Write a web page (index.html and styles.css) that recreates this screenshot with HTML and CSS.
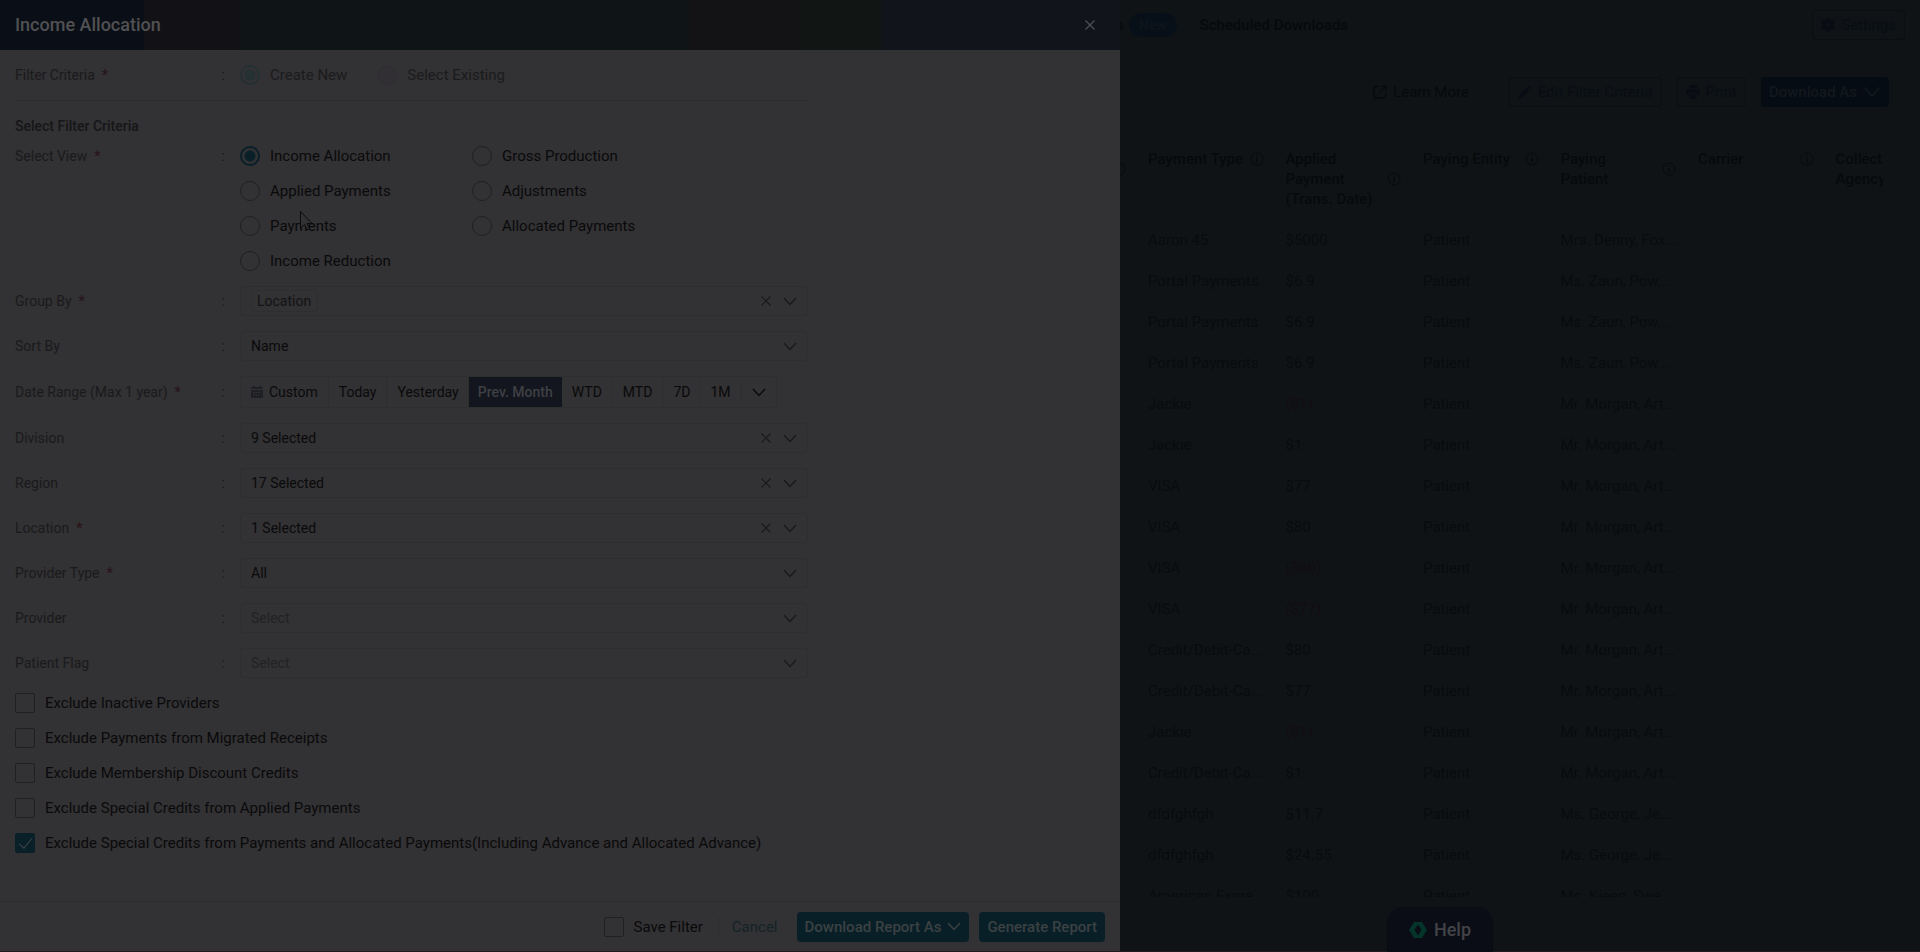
FILE: index.html
```html
<!DOCTYPE html>
<html lang="en">
<head>
  <meta charset="UTF-8" />
  <meta name="viewport" content="width=device-width, initial-scale=1.0"/>
  <title>Income Allocation</title>
  <link rel="stylesheet" href="styles.css">
</head>
<body>
  <!-- shared icons -->
  <svg class="sprite" aria-hidden="true">
    <symbol id="chevron" viewBox="0 0 14 9"><path d="M1 1l6 6.500L13 1" fill="none" stroke="currentColor" stroke-width="1.4"/></symbol>
    <symbol id="cross" viewBox="0 0 10 10"><path d="M.5.5l9 9M9.500.5l-9 9" fill="none" stroke="currentColor" stroke-width="1.2"/></symbol>
    <symbol id="info" viewBox="0 0 14 14"><circle cx="7" cy="7" r="6" fill="none" stroke="currentColor"/><path d="M7 6v4.500M7 3.500v1.300" stroke="currentColor" stroke-width="1.200"/></symbol>
  </svg>

  <div class="layout">
    <section class="drawer">
      <header class="drawer-header">
        <h1>Income Allocation</h1>
        <button type="button" class="close" aria-label="Close"><svg class="icon-cross"><use href="#cross"/></svg></button>
      </header>

      <form class="filter-form" id="filter-form">
        <div class="row row-criteria">
          <span class="label">Filter Criteria <b>*</b></span>
          <div class="criteria">
            <label class="option"><input type="radio" name="criteria" checked disabled> Create New</label>
            <label class="option existing"><input type="radio" name="criteria" disabled> Select Existing</label>
          </div>
        </div>

        <h2>Select Filter Criteria</h2>

        <div class="row row-view">
          <span class="label">Select View <b>*</b></span>
          <div class="views">
            <label class="option"><input type="radio" name="view" checked> Income Allocation</label>
            <label class="option"><input type="radio" name="view"> Gross Production</label>
            <label class="option"><input type="radio" name="view"> Applied Payments</label>
            <label class="option"><input type="radio" name="view"> Adjustments</label>
            <label class="option"><input type="radio" name="view"> Payments</label>
            <label class="option"><input type="radio" name="view"> Allocated Payments</label>
            <label class="option"><input type="radio" name="view"> Income Reduction</label>
          </div>
        </div>

        <div class="row">
          <label class="label" for="group-by">Group By <b>*</b></label>
          <div class="field">
            <select id="group-by" class="chip"><option>Location</option></select>
            <button type="button" class="clear" aria-label="Clear group by"><svg class="icon-cross"><use href="#cross"/></svg></button>
            <svg class="icon-chevron"><use href="#chevron"/></svg>
          </div>
        </div>

        <div class="row">
          <label class="label" for="sort-by">Sort By</label>
          <div class="field">
            <select id="sort-by"><option>Name</option></select>
            <svg class="icon-chevron"><use href="#chevron"/></svg>
          </div>
        </div>

        <div class="row">
          <span class="label">Date Range (Max 1 year) <b>*</b></span>
          <div class="range">
            <button type="button">
              <svg class="icon-calendar" viewBox="0 0 12 12"><path d="M1 1h1V0h2v1h4V0h2v1h1q1 0 1 1v1H0V2q0-1 1-1zM0 4h12v7q0 1-1 1H1q-1 0-1-1z" fill="currentColor"/><path d="M2 6.500h8M2 9h6" stroke="#323133" stroke-dasharray="1.500 1"/></svg>
              Custom
            </button>
            <button type="button">Today</button>
            <button type="button" class="tight">Yesterday</button>
            <button type="button" class="active">Prev. Month</button>
            <button type="button">WTD</button>
            <button type="button">MTD</button>
            <button type="button" class="tight">7D</button>
            <button type="button" class="last">1M</button>
            <button type="button" class="more" aria-label="More ranges"><svg class="icon-chevron"><use href="#chevron"/></svg></button>
          </div>
        </div>

        <div class="row">
          <label class="label" for="division">Division</label>
          <div class="field">
            <select id="division"><option>9 Selected</option></select>
            <button type="button" class="clear" aria-label="Clear division"><svg class="icon-cross"><use href="#cross"/></svg></button>
            <svg class="icon-chevron"><use href="#chevron"/></svg>
          </div>
        </div>

        <div class="row">
          <label class="label" for="region">Region</label>
          <div class="field">
            <select id="region"><option>17 Selected</option></select>
            <button type="button" class="clear" aria-label="Clear region"><svg class="icon-cross"><use href="#cross"/></svg></button>
            <svg class="icon-chevron"><use href="#chevron"/></svg>
          </div>
        </div>

        <div class="row">
          <label class="label" for="location">Location <b>*</b></label>
          <div class="field">
            <select id="location"><option>1 Selected</option></select>
            <button type="button" class="clear" aria-label="Clear location"><svg class="icon-cross"><use href="#cross"/></svg></button>
            <svg class="icon-chevron"><use href="#chevron"/></svg>
          </div>
        </div>

        <div class="row">
          <label class="label" for="provider-type">Provider Type <b>*</b></label>
          <div class="field">
            <select id="provider-type"><option>All</option></select>
            <svg class="icon-chevron"><use href="#chevron"/></svg>
          </div>
        </div>

        <div class="row">
          <label class="label" for="provider">Provider</label>
          <div class="field">
            <select id="provider" class="empty"><option>Select</option></select>
            <svg class="icon-chevron"><use href="#chevron"/></svg>
          </div>
        </div>

        <div class="row">
          <label class="label" for="patient-flag">Patient Flag</label>
          <div class="field">
            <select id="patient-flag" class="empty"><option>Select</option></select>
            <svg class="icon-chevron"><use href="#chevron"/></svg>
          </div>
        </div>

        <div class="excludes">
          <label class="option"><input type="checkbox"> Exclude Inactive Providers</label>
          <label class="option"><input type="checkbox"> Exclude Payments from Migrated Receipts</label>
          <label class="option"><input type="checkbox"> Exclude Membership Discount Credits</label>
          <label class="option"><input type="checkbox"> Exclude Special Credits from Applied Payments</label>
          <label class="option"><input type="checkbox" checked> Exclude Special Credits from Payments and Allocated Payments(Including Advance and Allocated Advance)</label>
        </div>
      </form>

      <footer class="drawer-footer">
        <label class="option"><input type="checkbox"> Save Filter</label>
        <a href="#" class="cancel">Cancel</a>
        <button type="button" class="primary">Download Report As <svg class="icon-chevron"><use href="#chevron"/></svg></button>
        <button type="submit" form="filter-form" class="primary">Generate Report</button>
      </footer>
    </section>

    <main class="page">
      <nav class="tabs">
        <a href="#">s</a>
        <span class="badge">New</span>
        <a href="#" class="tab">Scheduled Downloads</a>
        <button type="button" class="outline">
          <svg class="icon" viewBox="0 0 14 14"><path d="M5.500 0h3l.5 2 1.500.8 2-.6L14 4.800 12.500 6.200v1.600L14 9.200l-1.500 2.600-2-.6L9 12l-.5 2h-3L5 12l-1.500-.8-2 .6L0 9.200l1.500-1.400V6.200L0 4.800l1.500-2.600 2 .6L5 2zM7 5.200a1.800 1.800 0 1 0 0 3.600 1.800 1.800 0 0 0 0-3.600z" fill="currentColor" fill-rule="evenodd"/></svg>
          Settings
        </button>
      </nav>

      <div class="toolbar">
        <a href="#" class="learn">
          <svg class="icon" viewBox="0 0 14 14"><path d="M6 1.500H2Q1 1.500 1 2.500V12q0 1 1 1h9.500q1 0 1-1V8M8.500 1H13v4.500M13 1L6.500 7.500" fill="none" stroke="currentColor" stroke-width="1.300"/></svg>
          Learn More
        </a>
        <button type="button" class="outline">
          <svg class="icon" viewBox="0 0 14 14"><path d="M0 14l1-4 7.500-7.500 3 3L4 13zM9.500 1.500L11 0l3 3-1.500 1.500z" fill="currentColor"/></svg>
          Edit Filter Criteria
        </button>
        <button type="button" class="outline">
          <svg class="icon" viewBox="0 0 14 14"><path d="M3 0h8v3H3zM1.500 4h11Q14 4 14 5.500V10h-2.500V8h-9v2H0V5.500Q0 4 1.500 4zM3.500 9h7v5h-7z" fill="currentColor"/></svg>
          Print
        </button>
        <button type="button" class="download">Download As <svg class="icon-chevron"><use href="#chevron"/></svg></button>
      </div>

      <div class="report">
        <table>
          <thead>
            <tr>
              <th class="edge"><div class="middle"><svg class="icon"><use href="#info"/></svg></div></th>
              <th><div>Payment Type <svg class="icon"><use href="#info"/></svg></div></th>
              <th><div>Applied Payment (Trans. Date) <svg class="icon"><use href="#info"/></svg></div></th>
              <th><div>Paying Entity <svg class="icon"><use href="#info"/></svg></div></th>
              <th><div>Paying<br>Patient <svg class="icon"><use href="#info"/></svg></div></th>
              <th><div>Carrier <svg class="icon"><use href="#info"/></svg></div></th>
              <th><div>Collect<br>Agency</div></th>
            </tr>
          </thead>
          <tbody>
            <tr><td></td><td>Aaron 45</td><td>$5000</td><td>Patient</td><td>Mrs. Denny, Fox...</td><td></td><td></td></tr>
            <tr><td></td><td>Portal Payments</td><td>$6.9</td><td>Patient</td><td>Ms. Zaun, Pow...</td><td></td><td></td></tr>
            <tr><td></td><td>Portal Payments</td><td>$6.9</td><td>Patient</td><td>Ms. Zaun, Pow...</td><td></td><td></td></tr>
            <tr><td></td><td>Portal Payments</td><td>$6.9</td><td>Patient</td><td>Ms. Zaun, Pow...</td><td></td><td></td></tr>
            <tr><td></td><td>Jackie</td><td class="negative">($1)</td><td>Patient</td><td>Mr. Morgan, Art...</td><td></td><td></td></tr>
            <tr><td></td><td>Jackie</td><td>$1</td><td>Patient</td><td>Mr. Morgan, Art...</td><td></td><td></td></tr>
            <tr><td></td><td>VISA</td><td>$77</td><td>Patient</td><td>Mr. Morgan, Art...</td><td></td><td></td></tr>
            <tr><td></td><td>VISA</td><td>$80</td><td>Patient</td><td>Mr. Morgan, Art...</td><td></td><td></td></tr>
            <tr><td></td><td>VISA</td><td class="negative">($80)</td><td>Patient</td><td>Mr. Morgan, Art...</td><td></td><td></td></tr>
            <tr><td></td><td>VISA</td><td class="negative">($77)</td><td>Patient</td><td>Mr. Morgan, Art...</td><td></td><td></td></tr>
            <tr><td></td><td>Credit/Debit-Ca...</td><td>$80</td><td>Patient</td><td>Mr. Morgan, Art...</td><td></td><td></td></tr>
            <tr><td></td><td>Credit/Debit-Ca...</td><td>$77</td><td>Patient</td><td>Mr. Morgan, Art...</td><td></td><td></td></tr>
            <tr><td></td><td>Jackie</td><td class="negative">($1)</td><td>Patient</td><td>Mr. Morgan, Art...</td><td></td><td></td></tr>
            <tr><td></td><td>Credit/Debit-Ca...</td><td>$1</td><td>Patient</td><td>Mr. Morgan, Art...</td><td></td><td></td></tr>
            <tr><td></td><td>dfdfghfgh</td><td>$11.7</td><td>Patient</td><td>Ms. George, Je...</td><td></td><td></td></tr>
            <tr><td></td><td>dfdfghfgh</td><td>$24.55</td><td>Patient</td><td>Ms. George, Je...</td><td></td><td></td></tr>
            <tr><td></td><td>American Expre...</td><td>$100</td><td>Patient</td><td>Ms. Kieen, Swe...</td><td></td><td></td></tr>
          </tbody>
        </table>
      </div>
    </main>
  </div>

  <button type="button" class="help">
    <svg class="icon-help" viewBox="0 0 18 16"><path d="M5 0h8l5 8-5 8H5L0 8zM9 2.500L5.500 8 9 13.500 12.500 8z" fill="currentColor" fill-rule="evenodd"/></svg>
    Help
  </button>

  <svg class="cursor" viewBox="0 0 13 20" aria-hidden="true"><path d="M.5.5v16.500l4-3.500 2.500 5.500 2.500-1-2.500-5.500h5z" fill="#323133" stroke="#0c0c0d"/></svg>
</body>
</html>
```

FILE: styles.css
```css
* {
  box-sizing: border-box;
}
body {
  margin: 0;
  background: #0f1316;
  color: #0a0a0b;
  font-family: Roboto, "Liberation Sans", sans-serif;
  font-size: 15px;
  line-height: 20px;
}
button, select, input {
  margin: 0;
  padding: 0;
  border: 0;
  background: none;
  color: inherit;
  font: inherit;
}
a {
  color: inherit;
  text-decoration: none;
}
.sprite {
  display: none;
}
.icon-chevron {
  width: 14px;
  height: 9px;
  flex: none;
}
.icon-cross {
  width: 10px;
  height: 10px;
  display: block;
}
.icon-calendar {
  width: 12px;
  height: 12px;
  color: #1e2024;
}
.icon {
  width: 14px;
  height: 14px;
  flex: none;
}
.layout {
  display: grid;
  grid-template-columns: 7fr 5fr;
  height: 100vh;
  overflow: hidden;
  border-bottom: 1px solid #221a1e;
}

/* drawer */
.drawer {
  z-index: 1;
  display: flex;
  flex-direction: column;
  min-width: 0;
  background: #323133;
}
.drawer-header {
  display: flex;
  align-items: center;
  justify-content: space-between;
  height: 50px;
  padding: 0 25px 0 15px;
  background: linear-gradient(to right, #0a0e16 144px, #121116 144px, #121116 240px, #0f1416 240px, #0f1416 689px, #131214 689px, #131214 800px, #111615 800px, #111615 881px, #11141b 881px);
  color: #515153;
}
h1 {
  margin: 0;
  font-size: 18px;
  font-weight: 500;
}
.filter-form {
  flex: 1;
  padding: 0 15px;
}
.row {
  display: grid;
  grid-template-columns: 225px minmax(0, 568px);
  align-items: center;
  margin-bottom: 15px;
}
.label {
  display: flex;
  gap: 7px;
  padding-right: 15px;
  color: #1a1a1c;
  font-size: 14px;
}
.label::after {
  content: ":";
  margin-left: auto;
}
.label b {
  color: #29141a;
  font-weight: 500;
}
.row-criteria {
  max-width: 793px;
  height: 51px;
  margin: 0;
  border-bottom: 1px solid #2d2d2c;
}
.criteria {
  display: flex;
  gap: 30px;
  color: #1b1b1d;
}
.option {
  display: flex;
  align-items: center;
  gap: 10px;
}
h2 {
  margin: 15px 0 10px;
  color: #161618;
  font-size: 14px;
  font-weight: 500;
}
.row-view {
  align-items: start;
}
.views {
  display: grid;
  grid-template-columns: 232px 1fr;
  gap: 15px 0;
}
input[type="radio"], input[type="checkbox"] {
  appearance: none;
  width: 20px;
  height: 20px;
  border: 1px solid #202022;
  border-radius: 50%;
}
input[type="checkbox"] {
  border-radius: 2px;
}
input[type="radio"]:checked {
  border: 2px solid #092028;
  background: radial-gradient(circle, #092028 5px, transparent 6px);
}
input[type="radio"]:disabled {
  border-color: #2f2f2f;
  background: #312e34;
}
input[type="radio"]:checked:disabled {
  border-color: #243032;
  background: radial-gradient(circle, #243032 5px, transparent 6px);
}
input[type="checkbox"]:checked {
  border-color: #092028;
  background: #092028;
}
input[type="checkbox"]:checked::before {
  content: "";
  display: block;
  width: 6px;
  height: 12px;
  margin: 1px auto;
  border: solid #3f4446;
  border-width: 0 1px 1px 0;
  transform: rotate(40deg);
}
.field {
  display: flex;
  align-items: center;
  gap: 12px;
  height: 30px;
  padding: 0 10px;
  border: 1px solid #2e2e2e;
  border-radius: 4px;
  color: #1a1a1c;
  font-size: 14px;
}
.field select {
  flex: 1;
  min-width: 0;
  appearance: none;
  color: #0a0a0b;
}
.field select.chip {
  flex: none;
  height: 22px;
  margin-right: auto;
  padding: 0 5px;
  border: 1px solid #2e2e2f;
  border-radius: 4px;
  color: #131315;
}
.field select.empty {
  color: #222224;
}
.range {
  display: flex;
  width: max-content;
  height: 32px;
  border: 1px solid #2e2e2e;
  border-radius: 4px;
  font-size: 14px;
}
.range button {
  display: flex;
  align-items: center;
  gap: 6px;
  padding: 0 10px;
  border-right: 1px solid #2e2e2e;
}
.range .tight {
  padding-right: 9px;
}
.range .active {
  padding: 0 9px;
  border: 0;
  background: #13151f;
  color: #3f4043;
  font-weight: 500;
}
.range .last, .range .more {
  border: 0;
}
.range .more::before {
  content: "";
  height: 20px;
  margin: 0 4px 0 -10px;
  border-left: 1px solid #2e2e2e;
}
.excludes {
  display: grid;
  gap: 15px;
}
.drawer-footer {
  display: flex;
  align-items: center;
  justify-content: flex-end;
  gap: 10px;
  height: 50px;
  padding: 0 15px;
  border-top: 1px solid #2c2c2e;
}
.cancel {
  margin: 0 9px 0 5px;
  padding-left: 13px;
  border-left: 1px solid #2d2d2e;
  color: #122427;
}
.primary, .download {
  display: flex;
  align-items: center;
  gap: 6px;
  height: 30px;
  padding: 0 8px;
  border-radius: 4px;
  background: #091f27;
  color: #3b4143;
  font-weight: 500;
}

/* page behind the drawer */
.page {
  display: flex;
  flex-direction: column;
  min-width: 0;
  overflow: hidden;
  color: #08090b;
}
.tabs {
  display: flex;
  align-items: center;
  height: 50px;
  margin-left: -4px;
  padding-right: 15px;
  font-weight: 500;
}
.badge {
  margin: 0 23px 0 5px;
  padding: 2px 10px;
  border-radius: 12px;
  background: #071018;
  color: #0e151b;
  font-size: 14px;
}
.outline {
  display: flex;
  align-items: center;
  gap: 6px;
  height: 30px;
  padding: 0 8px;
  border: 1px solid #0a0d11;
  border-radius: 4px;
  color: #090d13;
  font-weight: 400;
}
.tabs .outline {
  margin-left: auto;
}
.toolbar {
  display: flex;
  align-items: center;
  justify-content: flex-end;
  gap: 15px;
  height: 84px;
  padding-right: 31px;
}
.learn {
  display: flex;
  align-items: center;
  gap: 6px;
  margin-right: 25px;
}
.download {
  background: #060c14;
  color: #11181e;
}
.download .icon-chevron {
  width: 18px;
  height: 12px;
}
.report {
  flex: 1;
  min-height: 0;
  margin: 0 37px 54px 0;
  overflow: hidden;
}
table {
  width: 843px;
  table-layout: fixed;
  border-collapse: collapse;
}
th {
  height: 85px;
  padding: 15px 12px 0 10px;
  font-weight: 500;
  text-align: left;
  vertical-align: top;
}
th div {
  display: flex;
  align-items: center;
  justify-content: space-between;
}
th.edge {
  width: 18px;
  padding: 15px 0 0;
}
th .middle {
  width: 6px;
  height: 40px;
  justify-content: flex-end;
}
td {
  height: 41px;
  padding: 0 10px;
  color: #090b0d;
  white-space: nowrap;
}
.negative {
  color: #140d10;
}
.help {
  position: fixed;
  right: 427px;
  bottom: 0;
  display: flex;
  align-items: center;
  gap: 7px;
  height: 45px;
  padding: 0 22px;
  border-radius: 16px 16px 0 0;
  background: #0a0d16;
  color: #424347;
  font-size: 18px;
  font-weight: 500;
}
.icon-help {
  width: 18px;
  height: 16px;
  color: #04342a;
}
.cursor {
  position: absolute;
  z-index: 2;
  top: 211px;
  left: 300px;
  width: 13px;
  height: 20px;
}
```
